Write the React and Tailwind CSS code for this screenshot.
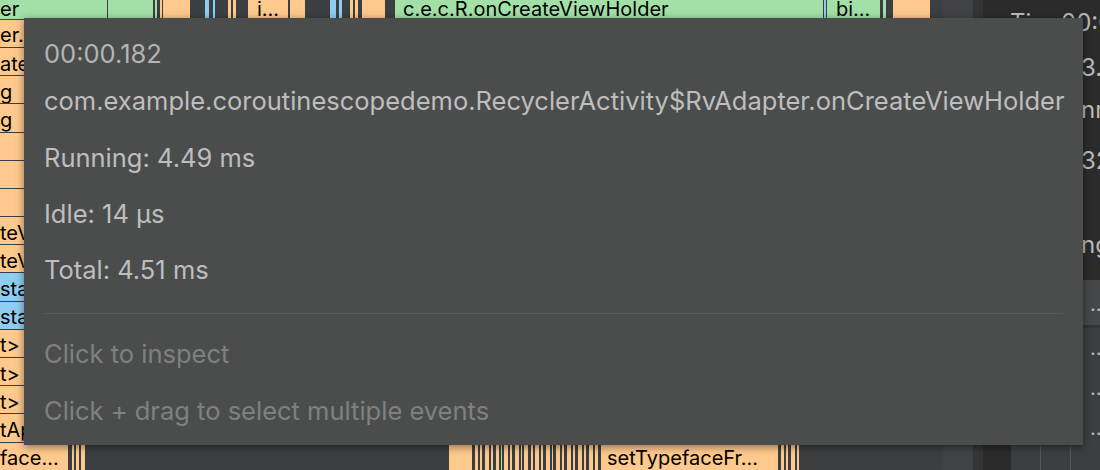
import React from 'react';

const BG = {
  g: 'bg-[#a2e0a8]',
  o: 'bg-[#fec98c]',
  b: 'bg-[#8ecdf1]',
  d: 'bg-[#3c3f41]',
  l: 'bg-[#404346]',
};

const PAD = {
  0: '',
  6: 'pl-[6px]',
  8: 'pl-[8px]',
  9: 'pl-[9px]',
};

const FONT = "font-['Inter','Noto_Sans',sans-serif]";
const WIDTH = 973;

function build(ranges) {
  const out = [];
  let x = 0;
  for (const r of ranges) {
    const [s, e, c, text, pad] = r;
    if (s > x) out.push({ w: s - x, c: 'd' });
    out.push({ w: e - s, c, text, pad: pad || 0 });
    x = e;
  }
  if (WIDTH > x) out.push({ w: WIDTH - x, c: 'd' });
  return out;
}

const topRow = build([
  [0, 107, 'g', 'er'],
  [108, 153, 'g'],
  [155, 157, 'g'],
  [160, 162, 'o'],
  [163, 190, 'o'],
  [205, 209, 'b'],
  [213, 215, 'b'],
  [228, 231, 'o'],
  [233, 236, 'o'],
  [248, 288, 'o', 'i...', 9],
  [290, 305, 'o'],
  [330, 336, 'b'],
  [339, 342, 'b'],
  [350, 353, 'o'],
  [355, 358, 'o'],
  [362, 385, 'o'],
  [395, 823, 'g', 'c.e.c.R.onCreateViewHolder', 8],
  [824, 826, 'b'],
  [827, 880, 'g', 'bi...', 9],
  [883, 886, 'g'],
  [893, 930, 'o'],
  [943, 973, 'l'],
]);

const bottomRow = build([
  [0, 68, 'o', 'face...'],
  [72, 74, 'o'],
  [76, 79, 'o'],
  [81, 85, 'o'],
  [449, 472, 'o'],
  [475, 478, 'o'],
  [480, 482, 'o'],
  [485, 489, 'o'],
  [491, 493, 'o'],
  [496, 499, 'o'],
  [501, 502, 'g'],
  [504, 508, 'o'],
  [510, 512, 'o'],
  [515, 519, 'o'],
  [521, 522, 'o'],
  [524, 528, 'o'],
  [531, 533, 'o'],
  [535, 539, 'o'],
  [541, 543, 'o'],
  [546, 550, 'o'],
  [552, 553, 'o'],
  [556, 560, 'o'],
  [562, 564, 'o'],
  [567, 571, 'o'],
  [573, 575, 'o'],
  [578, 582, 'o'],
  [584, 586, 'o'],
  [589, 593, 'o'],
  [595, 598, 'o'],
  [601, 778, 'o', 'setTypefaceFr...', 6],
  [781, 784, 'o'],
  [786, 788, 'o'],
  [791, 795, 'o'],
  [797, 799, 'o'],
  [943, 973, 'l'],
]);

const leftRows = [
  ['o', 'er.'],
  ['o', 'ate'],
  ['o', 'g'],
  ['o', 'g'],
  ['o', ''],
  ['o', ''],
  ['o', ''],
  ['o', 'teV'],
  ['o', 'teV'],
  ['b', 'sta'],
  ['b', 'sta'],
  ['o', 't>'],
  ['o', 't>'],
  ['o', 't>'],
  ['o', 'tAp'],
].map(([c, t]) => build([[0, 420, c, t], [943, 973, 'l']]));

function FlameRow({ segments, first }) {
  return (
    <div className={first ? 'flex shrink-0 h-[18.8px]' : 'flex shrink-0 h-[28.2px] pt-px'}>
      {segments.map((s, i) => (
        <div
          key={i}
          className={`h-full shrink-0 overflow-hidden whitespace-nowrap text-black text-[20px] flex items-center ${first ? '' : 'pt-[4px]'} ${BG[s.c]} ${PAD[s.pad]}`}
          style={{ width: s.w }}
        >
          {s.text}
        </div>
      ))}
    </div>
  );
}

function InfoLine({ label, value, labelW, className }) {
  return (
    <div className={`flex h-[36px] leading-[36px] ${className}`}>
      <span className={`${labelW} shrink-0 overflow-hidden`}>{label}</span>
      <span>{value}</span>
    </div>
  );
}

function RightPanel() {
  return (
    <div className="w-[117px] shrink-0 h-full bg-[#2b2b2b] flex flex-col overflow-hidden text-[#bababa] text-[24px] whitespace-nowrap">
      <div className="h-[280px] shrink-0 pl-[27px] pt-[5px] flex flex-col">
        <div className="flex h-[36px] leading-[36px]">
          <span className="w-[20px] shrink-0 overflow-hidden">Time</span>
          <span className="ml-[31px]">00:00.182</span>
        </div>
        <InfoLine label="Duration" value="3.81 ms" labelW="w-[71px]" className="mt-[9px]" />
        <InfoLine label="Type" value="nr" labelW="w-[71px]" className="mt-[6px]" />
        <InfoLine label="Thread" value="32" labelW="w-[71px]" className="mt-[15px]" />
        <InfoLine label="State" value="ng" labelW="w-[71px]" className="mt-[48px]" />
      </div>
      <div className="flex-1 ml-[28px] bg-[#3c3f41] flex flex-col">
        <div className="h-[48px] shrink-0 bg-[#45484a] border-b-[3px] border-[#323436] grid grid-cols-[30px_30px_1fr] text-[20px] leading-[48px]">
          <div />
          <div />
          <div className="pl-[19px]">...</div>
        </div>
        {[0, 1, 2, 3].map((i) => (
          <div key={i} className="h-[40px] shrink-0 grid grid-cols-[30px_30px_1fr] text-[20px] leading-[40px]">
            <div className="border-r border-[#55585a]" />
            <div className="border-r border-[#55585a]" />
            <div className="pl-[19px]">...</div>
          </div>
        ))}
      </div>
    </div>
  );
}

function Tooltip() {
  return (
    <div className="absolute left-[24px] top-[18px] w-[1059px] h-[427px] bg-[#4b4d4d] shadow-[0_2px_8px_rgba(0,0,0,0.45)] px-[20px] pt-[18px] text-[25.5px] leading-[36px] text-[#bebebe] whitespace-nowrap flex flex-col">
      <div className="h-[36px] text-[#b4b4b4]">00:00.182</div>
      <div className="h-[36px] mt-[11px]">com.example.coroutinescopedemo.RecyclerActivity$RvAdapter.onCreateViewHolder</div>
      <div className="h-[36px] mt-[21px]">Running: 4.49 ms</div>
      <div className="h-[36px] mt-[20px]">Idle: 14 µs</div>
      <div className="h-[36px] mt-[20px]">Total: 4.51 ms</div>
      <div className="h-px mt-[25px] bg-[#585a5a]" />
      <div className="h-[36px] mt-[22px] text-[#7f8080]">Click to inspect</div>
      <div className="h-[36px] mt-[21px] text-[#7f8080]">Click + drag to select multiple events</div>
    </div>
  );
}

export default function App() {
  return (
    <div className={`relative w-[1100px] h-[470px] overflow-hidden flex bg-[#3c3f41] ${FONT}`}>
      <div className="w-[973px] shrink-0 h-full flex flex-col overflow-hidden">
        <FlameRow segments={topRow} first />
        {leftRows.map((r, i) => (
          <FlameRow key={i} segments={r} />
        ))}
        <FlameRow segments={bottomRow} />
      </div>
      <div className="w-[10px] shrink-0 h-full bg-[#333537] border-l border-[#2e3032]" />
      <RightPanel />
      <Tooltip />
    </div>
  );
}
